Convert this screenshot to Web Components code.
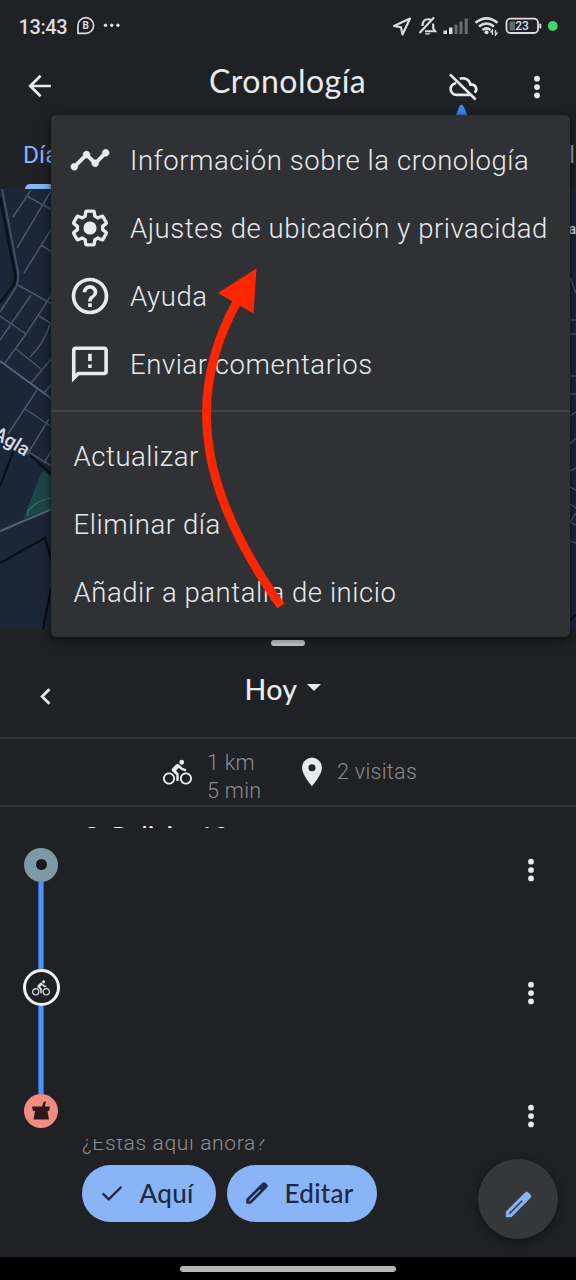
<!DOCTYPE html>
<html lang="es">
<head>
<meta charset="utf-8">
<title>Cronología</title>
<style>
body{margin:0;background:#202124;color:#e8eaed;font-family:Roboto,"Liberation Sans",sans-serif}
</style>
</head>
<body>
<timeline-app></timeline-app>
<script>
const define = (name, html) => customElements.define(name, class extends HTMLElement {
  constructor() {
    super();
    const t = document.createElement('template');
    t.innerHTML = typeof html === 'function' ? html(this) : html;
    this.attachShadow({mode: 'open'}).appendChild(t.content.cloneNode(true));
  }
});

const ICONS = {
  back: '<path d="M22.500 11H4.500M13 1.500L3.500 11l9.500 9.500" transform="translate(-.5 1)" fill="none" stroke="currentColor" stroke-width="2.500"/>',
  timeline: '<path d="M23 8c0 1.100-.9 2-2 2-.18 0-.35-.02-.51-.07l-3.560 3.550c.05.16.07.34.07.52 0 1.100-.9 2-2 2s-2-.9-2-2c0-.18.02-.36.07-.52l-2.550-2.550c-.16.05-.34.07-.52.07s-.36-.02-.52-.07l-4.550 4.560c.05.16.07.33.07.51 0 1.100-.9 2-2 2s-2-.9-2-2 .9-2 2-2c.18 0 .35.02.51.07l4.560-4.550C8.020 9.360 8 9.180 8 9c0-1.100.9-2 2-2s2 .9 2 2c0 .18-.02.36-.07.52l2.550 2.550c.16-.05.34-.07.52-.07s.36.02.52.07l3.550-3.560C19.020 8.350 19 8.180 19 8c0-1.100.9-2 2-2s2 .9 2 2z" transform="translate(.6 .5) scale(.95)" stroke="currentColor" stroke-width=".3"/>',
  settings: '<g transform="translate(12 12) scale(.92) translate(-12 -12)"><path fill="none" stroke="currentColor" stroke-width="2" stroke-linejoin="round" d="M19.430 12.980c.04-.32.07-.64.07-.98s-.03-.66-.07-.98l2.110-1.650c.19-.15.24-.42.12-.64l-2-3.460c-.12-.22-.39-.3-.61-.22l-2.490 1c-.52-.4-1.080-.73-1.690-.98l-.38-2.650C14.460 2.180 14.250 2 14 2h-4c-.25 0-.46.18-.49.42l-.38 2.650c-.61.25-1.170.59-1.690.98l-2.490-1c-.23-.09-.49 0-.61.22l-2 3.460c-.13.22-.07.49.12.64l2.110 1.650c-.04.32-.07.65-.07.98s.03.66.07.98l-2.110 1.650c-.19.15-.24.42-.12.64l2 3.460c.12.22.39.3.61.22l2.490-1c.52.4 1.080.73 1.690.98l.38 2.650c.03.24.24.42.49.42h4c.25 0 .46-.18.49-.42l.38-2.650c.61-.25 1.170-.59 1.690-.98l2.490 1c.23.09.49 0 .61-.22l2-3.460c.12-.22.07-.49-.12-.64z"/><circle cx="12" cy="12" r="3.900"/></g>',
  help: '<path d="M11 18h2v-2h-2v2zm1-16C6.480 2 2 6.480 2 12s4.480 10 10 10 10-4.480 10-10S17.520 2 12 2zm0 18c-4.410 0-8-3.590-8-8s3.590-8 8-8 8 3.590 8 8-3.590 8-8 8zm0-14c-2.210 0-4 1.790-4 4h2c0-1.100.9-2 2-2s2 .9 2 2c0 2-3 1.750-3 5h2c0-2.250 3-2.500 3-5 0-2.210-1.790-4-4-4z"/>',
  feedback: '<path d="M20 2H4c-1.100 0-2 .9-2 2v18l4-4h14c1.100 0 2-.9 2-2V4c0-1.100-.9-2-2-2zm0 14H5.170L4 17.170V4h16v12zm-9-4h2v2h-2zm0-6h2v4h-2z" transform="translate(.2 .5) scale(.98)"/>',
  bike: '<path d="M15.500 5.500c1.100 0 2-.9 2-2s-.9-2-2-2-2 .9-2 2 .9 2 2 2zM5 12c-2.800 0-5 2.200-5 5s2.200 5 5 5 5-2.200 5-5-2.200-5-5-5zm0 8.500c-1.900 0-3.500-1.600-3.500-3.500s1.600-3.500 3.500-3.500 3.500 1.600 3.500 3.500-1.600 3.500-3.500 3.500zm5.800-10l2.400-2.400.8.8c1.300 1.300 3 2.100 5.100 2.100V9c-1.500 0-2.700-.6-3.600-1.500l-1.900-1.900c-.5-.4-1-.6-1.600-.6s-1.100.2-1.400.6L7.800 8.400c-.4.4-.6.9-.6 1.400 0 .6.2 1.100.6 1.400L11 14v5h2v-6.200l-2.200-2.300zM19 12c-2.800 0-5 2.200-5 5s2.200 5 5 5 5-2.200 5-5-2.200-5-5-5zm0 8.500c-1.900 0-3.500-1.600-3.500-3.500s1.600-3.500 3.500-3.500 3.500 1.600 3.500 3.500-1.600 3.500-3.500 3.500z"/>',
  place: '<path d="M12 2C8.130 2 5 5.130 5 9c0 5.250 7 13 7 13s7-7.750 7-13c0-3.870-3.130-7-7-7zm0 9.500a2.500 2.500 0 010-5 2.500 2.500 0 010 5z"/>',
  cloud: '<g fill="none" stroke="currentColor" stroke-width="2.100" transform="translate(.8 .2) scale(.94)"><path d="M9.300 6.100A6.200 6.200 0 0 1 17.900 10.700h1.100a3.500 3.500 0 0 1 2.200 6.200M17.600 18.800H6.800A4.600 4.600 0 0 1 6.500 9.600"/><path d="M1.500 2.500L22 22.500"/></g>',
  more: '<circle cx="12" cy="5.300" r="2.300"/><circle cx="12" cy="12" r="2.300"/><circle cx="12" cy="18.700" r="2.300"/>',
  chevron: '<path d="M15.500 5.500L9 12l6.500 6.500" fill="none" stroke="currentColor" stroke-width="2.500"/>',
  check: '<path d="M4 12.300l5.200 5.200L20 6.700" fill="none" stroke="currentColor" stroke-width="2"/>',
  pencil: '<path d="M3 17.200V21h3.800L20.500 7.300c.7-.7.7-1.800 0-2.500l-1.300-1.300c-.7-.7-1.800-.7-2.500 0zM5 19v-1l9.300-9.300 1 1L6 19z" fill-rule="evenodd" stroke="currentColor" stroke-width=".4"/>'
};

define('ui-icon', el => `<style>
:host{display:block;flex:none;width:var(--size,24px);height:var(--size,24px)}svg{display:block;width:100%;height:100%;fill:currentColor;overflow:visible}
</style><svg viewBox="0 0 24 24">${ICONS[el.getAttribute('name')]}</svg>`);

define('status-bar', `<style>
:host{display:flex;height:52px;box-sizing:border-box;padding:0 18px 0 18.500px;align-items:center;justify-content:space-between;color:#dcdde0}
div{display:flex;align-items:center}
.time{font-size:20px;font-weight:500;letter-spacing:-.4px;width:58px;line-height:52px;padding-top:2px}
svg{display:block;overflow:visible}
text{font-family:Roboto,sans-serif;font-weight:700;fill:currentColor}
</style>
<div><span class="time">13:43</span>
<svg width="46" height="18" viewBox="0 0 46 18"><path d="M1 16.300V8.500A7.800 7.800 0 1 1 8.800 16.300Z" fill="none" stroke="currentColor" stroke-width="1.700"/><text x="5.500" y="12" font-size="10">B</text><g fill="currentColor"><circle cx="28.500" cy="8.200" r="1.700"/><circle cx="34.700" cy="8.200" r="1.700"/><circle cx="40.900" cy="8.200" r="1.700"/></g></svg></div>
<div><svg width="166" height="20" viewBox="392 16 166 20">
<path d="M394 26L410 18.500 402.500 34.500 401 27.300Z" fill="none" stroke="currentColor" stroke-width="2.100" stroke-linejoin="round"/>
<g fill="none" stroke="currentColor" stroke-width="2.100"><path d="M422.500 26c0-4 2-6.700 5.500-6.700 1.500 0 2.500.4 3.400 1.200M433.200 23.500v5l2 2.800H425M419.500 33L434 17.500"/></g><path d="M424.500 33.300h6q-3 3-6 0z" fill="currentColor"/>
<g fill="currentColor"><rect x="443.500" y="30.500" width="3.500" height="3.500"/><rect x="449" y="27.500" width="3.500" height="6.500"/><g opacity=".4"><rect x="454.500" y="24.500" width="3" height="9.500"/><rect x="459.500" y="21.500" width="3" height="12.500"/><rect x="464.700" y="18.500" width="3" height="15.500"/></g></g>
<g fill="none" stroke="currentColor" stroke-width="2.600"><path d="M475.500 22.800q11-9 22 0M479 26.500q7.500-6 15 0M482.500 30q4-3.200 8 0"/></g><circle cx="486.500" cy="32.300" r="2" fill="currentColor"/><path d="M492.500 35v-5l-2 2.500M495.500 30v5l2-2.500" fill="none" stroke="currentColor" stroke-width="1.300"/>
<rect x="506.500" y="18.700" width="31.500" height="14.300" rx="4" fill="none" stroke="currentColor" stroke-width="1.800"/><rect x="509.500" y="21.500" width="5.500" height="9" rx="1" fill="#66676a"/><rect x="539.300" y="23.500" width="2" height="5" rx="1" fill="currentColor"/><text x="515.300" y="30.300" font-size="12" style="font-weight:500">23</text>
<circle cx="552.800" cy="26" r="4.900" fill="#41d46c"/></svg></div>`);

define('app-header', `<style>
:host{display:grid;grid-template-columns:52px 1fr 32px 57px;height:68px;padding:0 0 0 14px;align-items:center}
h1{margin:-11px 0 0;font:400 32px Lato,sans-serif;text-align:center;line-height:56px;height:56px;letter-spacing:.5px;padding-left:0}
.back{--size:26px;justify-self:center}
.cloud{--size:32px;margin-top:2px}.more{--size:30px;margin:1px 0 0 2.500px}
:host{grid-template-columns:52px 445px 1fr 54.500px;grid-template-columns:52px 444px 11px 55px}
:host{display:flex}
.back{margin-left:13px}
h1{width:157px;margin-left:156px;white-space:nowrap}
.cloud{margin-left:81px}
.more{margin-left:42.500px}
</style><ui-icon class="back" name="back"></ui-icon><h1>Cronología</h1><ui-icon class="cloud" name="cloud"></ui-icon><ui-icon class="more" name="more"></ui-icon>`);

define('day-tabs', `<style>
:host{display:flex;justify-content:space-between;height:69px;box-sizing:border-box;padding:0 0 0 23px;font:400 24.500px/69px Roboto,sans-serif;color:#9aa0a6}
.on{display:flex;flex-direction:column;color:#8ab4f8;width:40px}
.on span{height:64px}
.on i{height:5px;margin-left:2px;border-radius:5px 0 0 0;background:#8ab4f8}
.next{width:7px}
</style><div class="on"><span>Día</span><i></i></div><div class="next">l</div>`);

define('map-view', `<style>:host{display:block;height:440px;background:#1b2637}svg{display:block}text{font-family:Roboto,sans-serif;font-weight:500;fill:#d7dae0}</style>
<svg width="576" height="440" viewBox="0 189 576 440" fill="none">
<path d="M42 471L52 476V508L23 519Z" fill="#1c4747"/>
<g stroke="#46566b" stroke-width="1.500"><path d="M31 190L13 217M27 196L52 210M52 189L17 248M52 228L24 273M41 245L52 252M18 285L52 304M31 295L0 340M52 294L26 334 5 363M0 316L26 334M16 349L41 369M39 316L52 324M50 324Q45 342 30 357M52 358L31 383M37 390L8 434M52 384L43 394M24 408L52 427M49 419L27 455M30 453L52 466M52 450L44 463"/></g>
<path d="M0 361L52 399M0 531L52 509" stroke="#53647a" stroke-width="2"/>
<path d="M2 189L18 272Q19 282 15 289L0 312" stroke="#3f5067" stroke-width="2"/>
<path d="M0 197L15 274Q16 282 12 287L0 303" stroke="#0b1019" stroke-width="2.500"/>
<path d="M30 455L52 475M13 452L0 486M0 563L45 538L52 562M51 588L43 629M570 620L576 615" stroke="#0a0e16" stroke-width="2.200"/>
<path d="M28 516V511Q38 499 52 498" stroke="#2f7764" stroke-width="1.200"/>
<path d="M570 278L576 293M570 320H576M570 334H576M570 376H576M570 394H576M570 416L576 412M570 444L576 438M570 471L576 468M570 487L576 490M570 504L576 508M576 513L570 522L576 525M570 541L576 543" stroke="#46566b" stroke-width="1.500"/>
<text transform="translate(-8 437) rotate(31)" font-size="19">Agla</text><text x="568.500" y="234" font-size="14">a</text>
</svg>`);

define('menu-item', el => `<style>
:host{display:flex;align-items:center;height:68px;padding-left:${el.hasAttribute('icon') ? 17 : 22.5}px;font-size:27.500px;font-weight:300;letter-spacing:.56px;white-space:nowrap;color:#e8eaed}
ui-icon{--size:44px;margin-right:18px}
</style>${el.hasAttribute('icon') ? `<ui-icon name="${el.getAttribute('icon')}"></ui-icon>` : ''}<slot></slot>`);

define('overflow-menu', `<style>
:host{display:block;box-sizing:border-box;padding:11px 0;background:#303134;border-radius:5px;box-shadow:0 3px 12px #0008,0 0 3px #0006}
hr{border:0;height:1.500px;background:#434447;margin:12px 0 11px}
</style>
<menu-item icon="timeline">Información sobre la cronología</menu-item>
<menu-item icon="settings">Ajustes de ubicación y privacidad</menu-item>
<menu-item icon="help">Ayuda</menu-item>
<menu-item icon="feedback">Enviar comentarios</menu-item>
<hr><menu-item>Actualizar</menu-item><menu-item>Eliminar día</menu-item><menu-item>Añadir a pantalla de inicio</menu-item>`);

define('day-picker', `<style>
:host{display:flex;flex-direction:column;height:108px;align-items:stretch}
.handle{align-self:center;width:34px;height:6px;border-radius:3px;background:#cdced0;margin-top:11px}
.row{display:grid;grid-template-columns:90px 1fr 90px;align-items:center;height:91px}
.row ui-icon{justify-self:center;--size:27px;margin-top:9px}
.day{display:flex;justify-content:center;align-items:center;gap:10px;font:500 28.500px Lato,sans-serif;letter-spacing:.3px;margin:-5px 0 0 -10px}
b{border:7px solid transparent;border-top-color:currentColor;border-bottom:0;margin-top:-3px}
</style><div class="handle"></div><div class="row"><ui-icon name="chevron"></ui-icon><div class="day">Hoy<b></b></div></div>`);

define('day-summary', `<style>
:host{display:flex;align-items:center;border-top:2px solid #343538;border-bottom:2px solid #343538;box-sizing:border-box;height:70px;padding-left:163px;font-size:21.500px;line-height:28px;letter-spacing:.3px;color:#8b8c90;font-weight:300}
ui-icon{color:#e8eaed}.bike{--size:29px}.trip{width:106px;padding:12px 0 0 15px;box-sizing:border-box;height:70px;white-space:nowrap}
.place{--size:34px;margin-left:-3px}
.visits{margin-left:8px}
</style><ui-icon class="bike" name="bike"></ui-icon><div class="trip">1 km<br>5 min</div><ui-icon class="place" name="place"></ui-icon><span class="visits">2 visitas</span>`);

define('pill-button', el => `<style>
:host{display:flex;align-items:center;box-sizing:border-box;height:57px;border-radius:29px;background:#8ab4f8;color:#1d2a44;font:500 26px Lato,sans-serif;letter-spacing:.3px;padding:0 0 2px 16px}
ui-icon{--size:28px;margin-right:13.500px}
</style><ui-icon name="${el.getAttribute('icon')}"></ui-icon><slot></slot>`);

define('visit-timeline', `<style>
:host{display:grid;grid-template-columns:82px 1fr 90px;height:450px}
.rail{display:flex;flex-direction:column;align-items:center;padding-top:40.500px}
.node{width:34px;height:34px;border-radius:50%;background:#7f98a5;display:grid;place-items:center;flex:none}
.stop i{width:11px;height:11px;border-radius:50%;background:#17181b}
.line{width:4px;border:solid #2c67bd;border-width:0 1px;height:87.500px;background:#4e93f6}
.trip{background:#202124;box-sizing:border-box;width:37px;height:37px;border:3px solid #f1f3f4;--size:18px}
.eat{background:#f28b82}
.body{display:flex;flex-direction:column}
.name{height:21px;overflow:hidden;font:500 25px/30px Lato,sans-serif;color:#fff;white-space:nowrap;display:flex;align-items:flex-start;padding-left:0;letter-spacing:.4px}
.name span{margin-top:12.500px}
.ask{margin-top:311px;height:20px;overflow:hidden;font-size:21px;letter-spacing:.65px;font-weight:300;line-height:24px;color:#8e8f93;white-space:nowrap}
.ask span{display:block;margin-top:-8px}
.actions{display:flex;gap:11px;margin-top:6px}
.actions :first-child{width:134px}.actions :last-child{width:150px}
.menus{display:flex;flex-direction:column;gap:93px;padding:48px 0 0 30px;--size:30px}
</style>
<div class="rail"><div class="node stop"><i></i></div><div class="line"></div><div class="node trip"><ui-icon name="bike"></ui-icon></div><div class="line"></div>
<div class="node eat"><svg width="20" height="19" viewBox="0 0 20 19" fill="#2b1a1d"><path d="M1 5.500h10L12.500 1 15 .500 13.800 5.500H19L18 10H16.500L18 18.500H2.500L4 10H2Z"/></svg></div></div>
<div class="body"><div class="name"><span>C. Policia, 10</span></div><div class="ask"><span>¿Estás aquí ahora?</span></div>
<div class="actions"><pill-button icon="check">Aquí</pill-button><pill-button icon="pencil">Editar</pill-button></div></div>
<div class="menus"><ui-icon name="more"></ui-icon><ui-icon name="more"></ui-icon><ui-icon name="more"></ui-icon></div>`);

define('edit-fab', `<style>:host{display:grid;place-items:center;border-radius:50%;background:#36373a;color:#8ab4f8;box-shadow:0 3px 10px #0007;--size:33px}ui-icon{margin-top:10px}</style><ui-icon name="pencil"></ui-icon>`);
define('nav-bar', `<style>:host{display:flex;justify-content:center;height:23px;background:#000}i{width:216px;height:6px;border-radius:3px;background:#b5b5b5;margin-top:9px}</style><i></i>`);
define('pointer-arrow', `<style>:host{display:block;pointer-events:none}svg{display:block}</style>
<svg width="100" height="350" viewBox="195 265 100 350"><path d="M281 606C208 503 179 405 238 300" fill="none" stroke="#ff2600" stroke-width="8.800"/><path d="M256.500 268.500L218 293 253.500 313.500Z" fill="#ff2600"/></svg>`);

define('timeline-app', `<style>
:host{display:flex;flex-direction:column;position:relative;width:576px;height:1280px;overflow:hidden;background:#202124}
overflow-menu{position:absolute;left:51px;top:115px;width:519px;height:522px}
pointer-arrow{position:absolute;left:195px;top:265px}
edit-fab{position:absolute;left:478px;top:1159px;width:80px;height:80px}
.tip{position:absolute;left:455px;top:103px}
</style>
<status-bar></status-bar><app-header></app-header><day-tabs></day-tabs><map-view></map-view>
<day-picker></day-picker><day-summary></day-summary><visit-timeline></visit-timeline><nav-bar></nav-bar>
<svg class="tip" width="14" height="14"><path d="M0 14Q3 8 4 4Q6.500 -1 9 4Q11 9 13 14Z" fill="#4285f4"/></svg>
<overflow-menu></overflow-menu><pointer-arrow></pointer-arrow><edit-fab></edit-fab>`);
</script>
</body>
</html>
